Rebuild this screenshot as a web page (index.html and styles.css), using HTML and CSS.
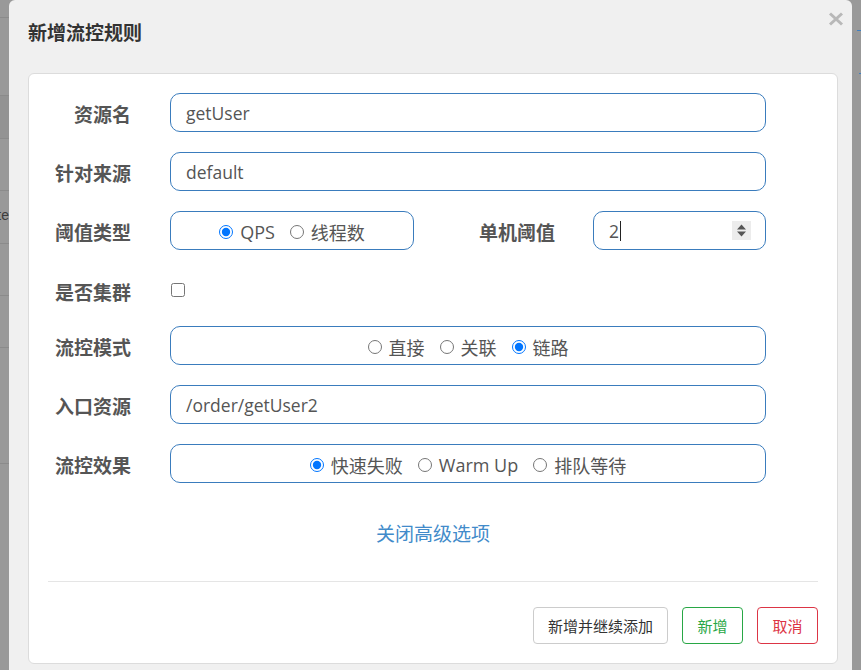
FILE: index.html
```html
<!DOCTYPE html>
<html lang="zh-CN">
<head>
<meta charset="utf-8">
<title>新增流控规则</title>
<link rel="stylesheet" href="styles.css">
</head>
<body>
<div class="screen">
  <div class="bg-left">
    <div class="bg-row"></div>
    <div class="bg-row"></div>
    <div class="bg-row"></div>
    <div class="bg-row"></div>
    <div class="bg-row"><span class="bg-text">te</span></div>
    <div class="bg-row"></div>
    <div class="bg-row"></div>
    <div class="bg-row"></div>
  </div>

  <div class="dialog">
    <div class="dlg-head">
      <h4 class="dlg-title">新增流控规则</h4>
      <span class="dlg-close">
        <svg width="16" height="14" viewBox="0 0 16 14"><path d="M2 1.5 L14 12.5 M14 1.5 L2 12.5" stroke="#b8b8b8" stroke-width="3" stroke-linecap="butt"/></svg>
      </span>
    </div>

    <div class="card">
      <div class="form">
        <div class="row">
          <span class="lbl">资源名</span>
          <div class="field">getUser</div>
        </div>
        <div class="row">
          <span class="lbl">针对来源</span>
          <div class="field">default</div>
        </div>
        <div class="row">
          <span class="lbl">阈值类型</span>
          <div class="field radios narrow">
            <label class="opt"><input type="radio" name="grade" checked><span>QPS</span></label>
            <label class="opt"><input type="radio" name="grade"><span>线程数</span></label>
          </div>
          <span class="lbl lbl2">单机阈值</span>
          <div class="field num">
            <span class="num-val">2<span class="caret"></span></span>
            <span class="spin">
              <svg width="19" height="19" viewBox="0 0 19 19"><path d="M5 8.5 L14 8.5 L9.5 3.5 Z M5 10.5 L14 10.5 L9.5 15.5 Z" fill="#555"/></svg>
            </span>
          </div>
        </div>
        <div class="row row-check">
          <span class="lbl">是否集群</span>
          <input class="check" type="checkbox">
        </div>
        <div class="row">
          <span class="lbl">流控模式</span>
          <div class="field radios">
            <label class="opt"><input type="radio" name="strategy"><span>直接</span></label>
            <label class="opt"><input type="radio" name="strategy"><span>关联</span></label>
            <label class="opt"><input type="radio" name="strategy" checked><span>链路</span></label>
          </div>
        </div>
        <div class="row">
          <span class="lbl">入口资源</span>
          <div class="field">/order/getUser2</div>
        </div>
        <div class="row">
          <span class="lbl">流控效果</span>
          <div class="field radios">
            <label class="opt"><input type="radio" name="behavior" checked><span>快速失败</span></label>
            <label class="opt"><input type="radio" name="behavior"><span>Warm Up</span></label>
            <label class="opt"><input type="radio" name="behavior"><span>排队等待</span></label>
          </div>
        </div>
      </div>

      <div class="adv"><a class="adv-link">关闭高级选项</a></div>

      <hr class="sep">

      <div class="actions">
        <button class="btn btn-default" type="button">新增并继续添加</button>
        <button class="btn btn-success" type="button">新增</button>
        <button class="btn btn-danger" type="button">取消</button>
      </div>
    </div>
  </div>

  <div class="bg-right">
    <span class="mark mark-1"></span>
    <span class="mark mark-2"></span>
  </div>
</div>
</body>
</html>
```

FILE: styles.css
```css
* { box-sizing: border-box; }

html, body {
  margin: 0;
  padding: 0;
}

body {
  background: #999999;
  font-family: "Open Sans", "Noto Sans CJK SC", sans-serif;
  overflow: hidden;
}

.screen {
  display: flex;
  width: 861px;
  height: 670px;
  overflow: hidden;
}

/* backdrop strips */
.bg-left {
  width: 9px;
  flex: none;
  background: #999999;
  display: flex;
  flex-direction: column;
  overflow: hidden;
}

.bg-row {
  flex: none;
  border-bottom: 1px solid #8b8b8b;
  display: flex;
  align-items: center;
  justify-content: flex-end;
  overflow: hidden;
}
.bg-row:nth-child(1) { height: 18px; }
.bg-row:nth-child(2) { height: 78px; }
.bg-row:nth-child(3) { height: 43px; background: #939393; }
.bg-row:nth-child(4) { height: 52px; }
.bg-row:nth-child(5) { height: 53px; }
.bg-row:nth-child(6) { height: 52px; }
.bg-row:nth-child(7) { height: 52px; }
.bg-row:nth-child(8) { height: 116px; }

.bg-text {
  font-family: "Liberation Sans", sans-serif;
  font-size: 14px;
  color: #3c3c3c;
  white-space: nowrap;
  margin-top: -4px;
}

.bg-right {
  width: 9px;
  flex: none;
  background: #999999;
  display: flex;
  flex-direction: column;
  align-items: flex-end;
}
.mark {
  display: block;
  height: 1px;
  background: #3f7fc0;
}
.mark-1 { width: 4px; margin-top: 30px; }
.mark-2 { width: 2px; margin-top: 42px; }

/* dialog */
.dialog {
  width: 843px;
  flex: none;
  background: #f0f0f0;
  border-radius: 6px 6px 0 0;
  display: flex;
  flex-direction: column;
}

.dlg-head {
  height: 73px;
  flex: none;
  display: flex;
  justify-content: space-between;
  align-items: flex-start;
  padding: 0 8px 0 19px;
}

.dlg-title {
  margin: 21px 0 0 0;
  font-size: 19px;
  line-height: 24px;
  font-weight: 700;
  color: #333333;
}

.dlg-close {
  display: block;
  margin-top: 12px;
  width: 16px;
  height: 14px;
}
.dlg-close svg { display: block; }

.card {
  margin: 0 14px 0 19px;
  background: #ffffff;
  border: 1px solid #dcdcdc;
  border-radius: 6px;
  padding: 19px 19px 19px 19px;
}

.form {
  padding-right: 52px;
}

.row {
  display: flex;
  align-items: center;
  height: 39px;
  margin-bottom: 20px;
}
.row:last-child { margin-bottom: 0; }
.row-check {
  height: 36px;
  padding-top: 4px;
}

.lbl {
  flex: none;
  width: 83px;
  margin-right: 39px;
  padding-top: 3px;
  text-align: right;
  font-size: 19px;
  font-weight: 700;
  color: #555555;
  white-space: nowrap;
}

.lbl2 {
  flex: 1;
  width: auto;
  margin-right: 38px;
}

.field {
  flex: 1;
  height: 39px;
  border: 1px solid #3a7cbd;
  border-radius: 10px;
  padding: 0 15px;
  display: flex;
  align-items: center;
  font-size: 17.5px;
  color: #555555;
  white-space: nowrap;
}

.radios {
  justify-content: center;
  gap: 15px;
  padding-top: 3px;
  color: #555555;
  font-size: 18px;
}
.narrow {
  flex: none;
  width: 244px;
}

.opt {
  display: inline-flex;
  align-items: center;
  gap: 7px;
}
.opt input {
  margin: 0;
  width: 14px;
  height: 14px;
}

.num {
  flex: none;
  width: 173px;
  padding: 0 14px 0 15px;
  justify-content: space-between;
}
.num-val {
  display: inline-flex;
  align-items: center;
}
.caret {
  display: inline-block;
  width: 1px;
  height: 20px;
  background: #222222;
  margin-left: 1px;
}
.spin {
  display: block;
  width: 19px;
  height: 19px;
  background: #ececec;
}
.spin svg { display: block; }

.check {
  margin: 0 0 0 1px;
  width: 14px;
  height: 14px;
}

.adv {
  margin-top: 40px;
  text-align: center;
  line-height: 22px;
  font-size: 19px;
}
.adv-link {
  color: #428bca;
  text-decoration: none;
}

.sep {
  border: 0;
  border-top: 1px solid #e5e5e5;
  height: 0;
  margin: 36px 0 0 0;
}

.actions {
  margin-top: 25px;
  display: flex;
  justify-content: flex-end;
  gap: 14px;
}

.btn {
  width: 61px;
  height: 37px;
  padding: 0;
  border: 1px solid #cccccc;
  border-radius: 4px;
  background: #ffffff;
  font-family: "Open Sans", "Noto Sans CJK SC", sans-serif;
  font-size: 15px;
  color: #333333;
  display: inline-flex;
  align-items: center;
  justify-content: center;
  white-space: nowrap;
}
.btn-default {
  width: 135px;
}
.btn-success {
  border-color: #28a745;
  color: #28a745;
}
.btn-danger {
  border-color: #dc3545;
  color: #dc3545;
}
```
